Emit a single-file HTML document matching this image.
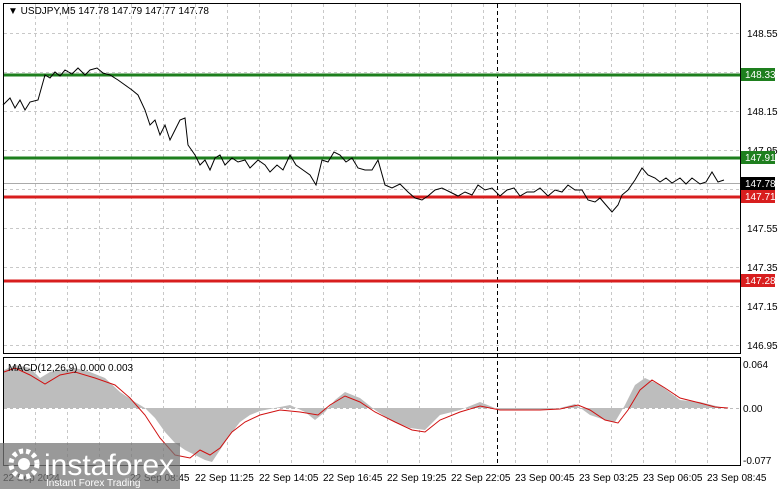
<!DOCTYPE html><html><head><style>
body{margin:0;background:#fff;width:781px;height:489px;overflow:hidden;font-family:"Liberation Sans",sans-serif}
svg text{font-family:"Liberation Sans",sans-serif;font-size:10px}
</style></head><body>
<svg width="781" height="489" xmlns="http://www.w3.org/2000/svg">
<rect width="781" height="489" fill="#fff"/>
<g stroke="#c8c8c8" stroke-dasharray="3,3" stroke-width="1">
<path d="M35.5 4V353M67.5 4V353M99.5 4V353M131.5 4V353M163.5 4V353M195.5 4V353M227.5 4V353M259.5 4V353M291.5 4V353M323.5 4V353M355.5 4V353M387.5 4V353M419.5 4V353M451.5 4V353M483.5 4V353M515.5 4V353M547.5 4V353M579.5 4V353M611.5 4V353M643.5 4V353M675.5 4V353M707.5 4V353"/>
<path d="M35.5 358V465M67.5 358V465M99.5 358V465M131.5 358V465M163.5 358V465M195.5 358V465M227.5 358V465M259.5 358V465M291.5 358V465M323.5 358V465M355.5 358V465M387.5 358V465M419.5 358V465M451.5 358V465M483.5 358V465M515.5 358V465M547.5 358V465M579.5 358V465M611.5 358V465M643.5 358V465M675.5 358V465M707.5 358V465"/>
<path d="M4 33.5H740M4 72.5H740M4 111.5H740M4 150.5H740M4 189.5H740M4 228.5H740M4 267.5H740M4 306.5H740M4 345.5H740"/>
</g>
<path d="M497.5 4V465" stroke="#000" stroke-dasharray="4,3"/>
<rect x="3.5" y="3.5" width="737" height="350" fill="none" stroke="#000"/>
<rect x="3.5" y="357.5" width="737" height="108" fill="none" stroke="#000"/>
<g stroke-width="3"><path d="M4 75H740" stroke="#1e7f1e"/><path d="M4 158H740" stroke="#1e7f1e"/><path d="M4 197H740" stroke="#d81e1e"/><path d="M4 281H740" stroke="#d81e1e"/></g>
<path d="M4 183.5H740" stroke="#aaa" stroke-width="1"/>
<polyline fill="none" stroke="#000" stroke-width="1" points="3,105 10,98 15,108 20,100 25,110 30,102 38,100 45,75 50,78 55,72 60,76 65,70 72,74 78,68 85,75 90,70 97,68 103,73 110,75 118,80 125,85 132,90 138,95 145,110 150,125 155,120 160,135 165,125 170,140 175,130 180,120 185,118 188,145 195,155 200,165 205,160 210,170 215,158 220,155 225,165 232,158 238,162 245,160 250,168 258,160 265,165 270,172 277,165 283,170 290,155 296,165 303,170 310,175 316,185 322,160 328,162 334,152 340,155 346,162 352,158 358,168 365,170 372,170 378,160 385,185 392,188 400,184 408,192 415,198 422,200 428,196 435,190 442,188 450,192 458,196 465,192 472,195 478,185 485,190 492,188 500,196 507,190 514,188 520,196 527,192 534,192 540,188 548,196 555,190 562,192 568,185 575,190 582,190 588,200 595,202 600,198 606,205 612,212 618,205 622,195 628,190 635,180 642,168 648,175 655,178 660,182 666,178 672,183 680,178 686,184 692,178 700,184 706,182 712,172 718,182 724,180"/>
<path d="M4 408.5H740" stroke="#bbb" stroke-dasharray="3,3"/>
<polygon fill="#bdbdbd" points="4,408 4,370 15,365 30,368 40,378 50,372 60,370 75,368 90,372 105,378 120,392 135,402 145,408 155,418 165,432 175,443 185,450 195,455 205,460 212,462 220,450 230,435 240,422 250,415 260,411 275,408 290,405 305,412 315,420 325,412 335,400 345,392 360,398 375,410 390,420 410,428 425,430 440,415 460,410 480,402 500,410 520,410 540,410 560,408 575,404 590,415 605,420 615,422 625,405 635,385 645,378 660,385 680,400 700,402 720,407 730,408"/>
<polyline fill="none" stroke="#d01010" stroke-width="1" points="4,372 15,368 30,375 45,384 60,375 75,372 95,378 115,385 130,398 145,415 160,438 175,455 190,458 200,450 210,455 220,448 232,432 245,422 260,415 280,410 300,412 318,415 330,405 345,396 360,402 375,412 395,422 412,430 425,432 440,420 460,412 480,406 500,410 520,410 540,410 560,409 578,405 590,410 605,420 618,423 628,410 640,390 652,380 665,388 680,398 700,403 715,407 728,408"/>
<g fill="#000">
<text x="747" y="37">148.55</text><text x="747" y="115">148.15</text><text x="747" y="154">147.95</text><text x="747" y="232">147.55</text><text x="747" y="271">147.35</text><text x="747" y="310">147.15</text><text x="747" y="349">146.95</text>
<text x="743" y="368">0.064</text><text x="743" y="412">0.00</text><text x="743" y="464">-0.077</text>
</g>
<rect x="741" y="68" width="34" height="13" fill="#1e7f1e"/><text x="745" y="78" fill="#fff">148.33</text>
<rect x="741" y="151" width="34" height="13" fill="#1e7f1e"/><text x="745" y="161" fill="#fff">147.91</text>
<rect x="741" y="177" width="34" height="13" fill="#000"/><text x="745" y="187" fill="#fff">147.78</text>
<rect x="741" y="190" width="34" height="13" fill="#d81e1e"/><text x="745" y="200" fill="#fff">147.71</text>
<rect x="741" y="274" width="34" height="13" fill="#d81e1e"/><text x="745" y="284" fill="#fff">147.28</text>
<text x="8" y="14" fill="#000">▼ USDJPY,M5  147.78 147.79 147.77 147.78</text>
<text x="8" y="371" fill="#000">MACD(12,26,9) 0.000 0.003</text>
<g fill="#000">
<text x="3" y="481">22 Sep 2024</text><text x="130" y="481">22 Sep 08:45</text><text x="195" y="481">22 Sep 11:25</text><text x="259" y="481">22 Sep 14:05</text><text x="323" y="481">22 Sep 16:45</text><text x="387" y="481">22 Sep 19:25</text><text x="451" y="481">22 Sep 22:05</text><text x="515" y="481">23 Sep 00:45</text><text x="579" y="481">23 Sep 03:25</text><text x="643" y="481">23 Sep 06:05</text><text x="707" y="481">23 Sep 08:45</text>
</g>
<rect x="0" y="443" width="180" height="46" fill="#777" opacity="0.75"/>
<circle cx="24" cy="464" r="13" fill="none" stroke="#fff" stroke-width="5" stroke-dasharray="4,3"/>
<circle cx="24" cy="464" r="6" fill="#fff"/>
<text x="44" y="475" fill="#fff" style="font-size:30px">instaforex</text>
<text x="46" y="486" fill="#fff" style="font-size:10px">Instant Forex Trading</text>
</svg>
</body></html>
